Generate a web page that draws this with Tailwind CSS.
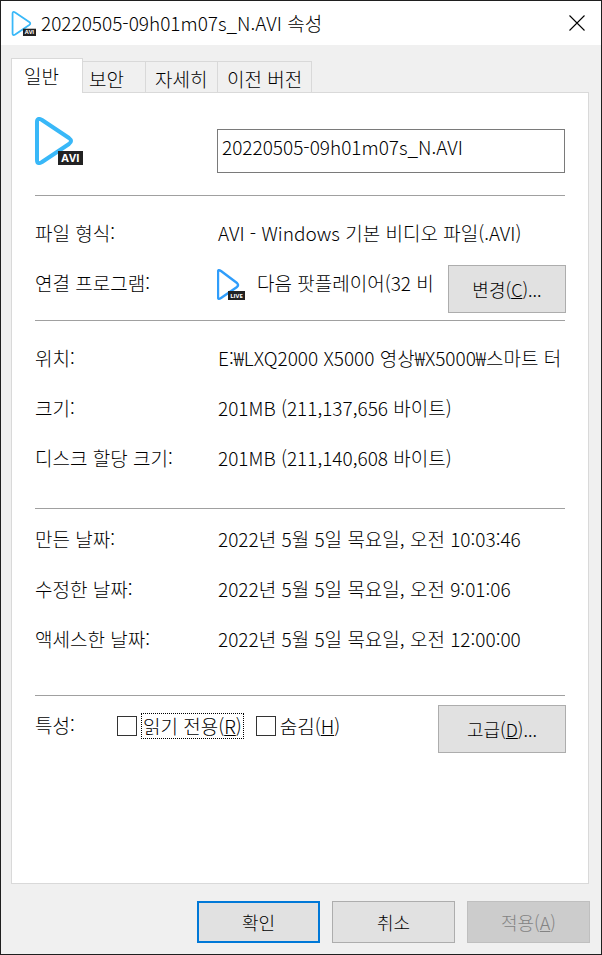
<!DOCTYPE html>
<html lang="ko">
  <head>
    <meta charset="utf-8" />
    <meta name="viewport" content="width=device-width, initial-scale=1" />
    <title>20220505-09h01m07s_N.AVI 속성</title>
    <script src="https://cdn.jsdelivr.net/npm/@tailwindcss/browser@4"></script>
  </head>
  <body class="bg-[#f0f0f0]">
    <div
      class="flex flex-col min-h-screen border border-[#1f1f1f] bg-[#f0f0f0] font-['Noto_Sans_CJK_KR',sans-serif] font-light text-[19px] leading-7 text-black"
    >
      <!-- title bar -->
      <header class="flex items-center h-11 pl-[10px] pr-3 bg-white">
        <svg class="w-[25px] h-[25px] shrink-0" viewBox="0 0 48 48" aria-hidden="true">
          <path d="M3 5Q3 0 8 3L35 21Q39 24 35 27L8 45Q3 48 3 43Z" fill="none" stroke="#39b8f8" stroke-width="3.4" stroke-linejoin="round" />
          <rect x="23" y="34" width="25" height="14" fill="#222" />
          <text x="35.5" y="45" text-anchor="middle" font-family="Open Sans, sans-serif" font-weight="700" font-size="11" fill="#fff">AVI</text>
        </svg>
        <h1 class="ml-[5px] grow whitespace-nowrap">20220505-09h01m07s_N.AVI 속성</h1>
        <button type="button" aria-label="닫기" class="p-1">
          <svg class="w-4 h-4" viewBox="0 0 16 16" fill="none" stroke="#000" stroke-width="1.1">
            <path d="M0.5 0.5L15.5 15.5M15.5 0.5L0.5 15.5" />
          </svg>
        </button>
      </header>

      <main class="flex flex-col grow pl-[10px] pt-[13px] pb-[11px] pr-3">
        <!-- tabs -->
        <div role="tablist" class="flex items-end -mb-px">
          <button type="button" role="tab" aria-selected="true" class="relative h-[35px] w-[72px] pl-3 text-left bg-white border border-b-0 border-[#d9d9d9]">일반</button>
          <button type="button" role="tab" class="h-8 w-[63px] pl-[6px] pt-[3px] text-left border border-l-0 border-[#d9d9d9]">보안</button>
          <button type="button" role="tab" class="h-8 w-[72px] pl-[9px] pt-[3px] text-left border border-l-0 border-[#d9d9d9]">자세히</button>
          <button type="button" role="tab" class="h-8 w-[94px] pl-[9px] pt-[3px] text-left whitespace-nowrap border border-l-0 border-[#d9d9d9]">이전 버전</button>
        </div>

        <section class="grow px-[23px] bg-white border border-[#d9d9d9]">
          <div class="flex h-[103px] pt-6 border-b border-[#a0a0a0]">
            <div class="w-[182px] shrink-0">
              <svg class="w-12 h-12" viewBox="0 0 48 48" aria-hidden="true">
                <path d="M2 5Q2 0 7 3L34 21Q38 24 34 27L7 45Q2 48 2 43Z" fill="none" stroke="#39b8f8" stroke-width="4" stroke-linejoin="round" />
                <rect x="23" y="34" width="25" height="14" fill="#222" />
                <text x="35.5" y="45" text-anchor="middle" font-family="Open Sans, sans-serif" font-weight="700" font-size="11" fill="#fff">AVI</text>
              </svg>
            </div>
            <input type="text" aria-label="파일 이름" value="20220505-09h01m07s_N.AVI" class="grow min-w-0 h-11 mt-3 pl-1 pb-[10px] border border-[#7a7a7a] bg-white" />
          </div>

          <div class="pt-3 h-[125px] border-b border-[#a0a0a0]">
            <div class="flex items-center h-[50px]">
              <span class="w-[183px] shrink-0">파일 형식:</span>
              <span class="whitespace-nowrap">AVI - Windows 기본 비디오 파일(.AVI)</span>
            </div>
            <div class="flex h-[50px]">
              <span class="w-[182px] shrink-0 self-center">연결 프로그램:</span>
              <svg class="w-7 h-8 mt-[11px] shrink-0" viewBox="0 0 28 32" aria-hidden="true">
                <path d="M1 3Q1 0 4 2L20 14Q22 16 20 18L4 29Q1 31 1 28Z" fill="none" stroke="#2f9dfb" stroke-width="2.4" stroke-linejoin="round" />
                <rect x="11" y="22" width="17" height="9" fill="#222" />
                <text x="19.5" y="29" text-anchor="middle" font-family="Open Sans, sans-serif" font-weight="700" font-size="6" fill="#fff">LIVE</text>
              </svg>
              <span class="grow min-w-0 ml-3 mr-2 self-center whitespace-nowrap overflow-hidden">다음 팟플레이어(32 비</span>
              <button type="button" class="w-[118px] h-12 mt-[7px] -mr-px shrink-0 text-lg bg-[#e1e1e1] border border-[#adadad]">변경(<u>C</u>)...</button>
            </div>
          </div>

          <div class="pt-3 h-[188px] border-b border-[#a0a0a0]">
            <div class="flex items-center h-[50px]">
              <span class="w-[183px] shrink-0">위치:</span>
              <span class="whitespace-nowrap overflow-hidden">E:₩LXQ2000 X5000 영상₩X5000₩스마트 터</span>
            </div>
            <div class="flex items-center h-[50px]">
              <span class="w-[183px] shrink-0">크기:</span>
              <span>201MB (211,137,656 바이트)</span>
            </div>
            <div class="flex items-center h-[50px]">
              <span class="w-[183px] shrink-0">디스크 할당 크기:</span>
              <span>201MB (211,140,608 바이트)</span>
            </div>
          </div>

          <div class="pt-[5px] h-[187px] border-b border-[#a0a0a0]">
            <div class="flex items-center h-[50px]">
              <span class="w-[183px] shrink-0">만든 날짜:</span>
              <span class="whitespace-nowrap">2022년 5월 5일 목요일, 오전 10:03:46</span>
            </div>
            <div class="flex items-center h-[50px]">
              <span class="w-[183px] shrink-0">수정한 날짜:</span>
              <span class="whitespace-nowrap">2022년 5월 5일 목요일, 오전 9:01:06</span>
            </div>
            <div class="flex items-center h-[50px]">
              <span class="w-[183px] shrink-0">액세스한 날짜:</span>
              <span class="whitespace-nowrap">2022년 5월 5일 목요일, 오전 12:00:00</span>
            </div>
          </div>

          <div class="flex pt-[9px]">
            <span class="w-[82px] pt-[6px] shrink-0">특성:</span>
            <div class="flex items-center h-[42px]">
              <input id="readonly" type="checkbox" class="appearance-none w-5 h-5 shrink-0 bg-white border border-[#333] checked:bg-[#333]" />
              <label for="readonly" class="ml-1 px-px leading-6 border border-dotted border-black whitespace-nowrap">읽기 전용(<u>R</u>)</label>
              <input id="hidden" type="checkbox" class="appearance-none w-5 h-5 ml-3 shrink-0 bg-white border border-[#333] checked:bg-[#333]" />
              <label for="hidden" class="ml-1 leading-6 whitespace-nowrap">숨김(<u>H</u>)</label>
            </div>
            <button type="button" class="w-32 h-12 ml-auto -mr-px shrink-0 text-lg bg-[#e1e1e1] border border-[#adadad]">고급(<u>D</u>)...</button>
          </div>
        </section>

        <footer class="flex justify-end gap-3 pt-[17px] -mr-px text-lg">
          <button type="button" class="w-[123px] h-[42px] bg-[#e1e1e1] border-2 border-[#0078d7]">확인</button>
          <button type="button" class="w-[123px] h-[42px] bg-[#e1e1e1] border border-[#adadad]">취소</button>
          <button type="button" disabled class="w-[123px] h-[42px] bg-[#cccccc] border border-[#bfbfbf] text-[#838383]">적용(<u>A</u>)</button>
        </footer>
      </main>
    </div>
  </body>
</html>
